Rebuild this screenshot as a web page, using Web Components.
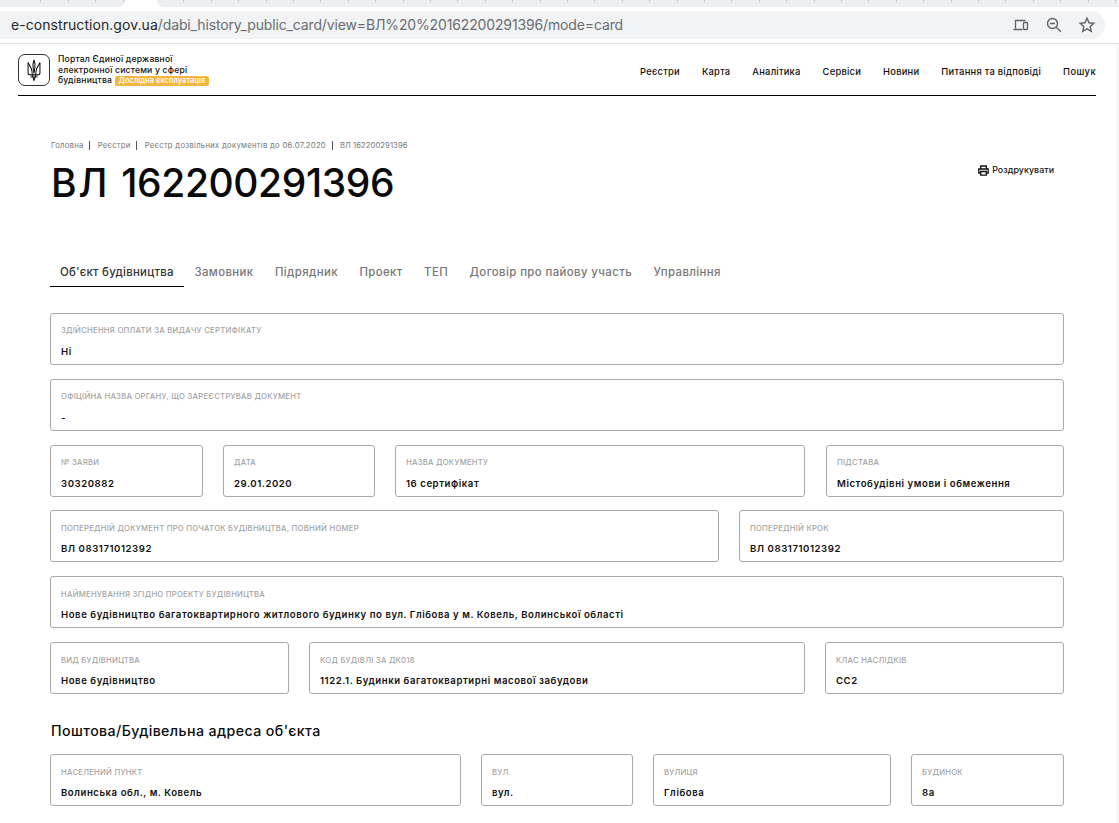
<!DOCTYPE html>
<html><head><meta charset="utf-8"><style>
html,body{margin:0;padding:0;background:#fff;overflow:hidden;height:823px;font-family:Inter,"Liberation Sans",sans-serif}
</style></head><body>
<browser-bar></browser-bar>
<site-header></site-header>
<page-main>
<bread-crumbs></bread-crumbs>
<title-row></title-row>
<tab-strip></tab-strip>
<section style="display:flex;flex-direction:column;gap:14px;">
<field-row cols="1fr"><info-field label="Здійснення оплати за видачу сертифікату" value="Ні"></info-field></field-row>
<field-row cols="1fr"><info-field label="Офіційна назва органу, що зареєстрував документ" value="-"></info-field></field-row>
<field-row cols="153px 152px 411px 238px"><info-field label="№ заяви" value="30320882"></info-field><info-field label="Дата" value="29.01.2020"></info-field><info-field label="Назва документу" value="16 сертифікат" style="margin-right:1px"></info-field><info-field label="Підстава" value="Містобудівні умови і обмеження"></info-field></field-row>
<field-row cols="669px 325px" style="margin-top:-1px;--lab-shift:1px"><info-field label="Попередній документ про початок будівництва, повний номер" value="ВЛ 083171012392"></info-field><info-field label="Попередній крок" value="ВЛ 083171012392"></info-field></field-row>
<field-row cols="1fr" style="--lab-shift:1px"><info-field label="Найменування згідно проекту будівництва" value="Нове будівництво багатоквартирного житлового будинку по вул. Глібова у м. Ковель, Волинської області"></info-field></field-row>
<field-row cols="239px 496px 239px" style="--lab-shift:1px"><info-field label="Вид будівництва" value="Нове будівництво"></info-field><info-field label="Код будівлі за ДК018" value="1122.1. Будинки багатоквартирні масової забудови"></info-field><info-field label="Клас наслідків" value="СС2"></info-field></field-row>
</section>
<section-head>Поштова/Будівельна адреса об'єкта</section-head>
<field-row cols="411px 152px 238px 153px" style="--lab-shift:1px"><info-field label="Населений пункт" value="Волинська обл., м. Ковель"></info-field><info-field label="Вул." value="вул."></info-field><info-field label="Вулиця" value="Глібова"></info-field><info-field label="Будинок" value="8а"></info-field></field-row>
</page-main>
<scroll-track></scroll-track>
<script>
function def(name, css, html, init){
  customElements.define(name, class extends HTMLElement{
    connectedCallback(){
      if(this.shadowRoot) return;
      const r=this.attachShadow({mode:'open'});
      r.innerHTML='<style>'+css+'</style>'+(typeof html==='function'?html(this):html);
      if(init) init(this,r);
    }
  });
}
def('scroll-track',`:host{position:fixed;top:44px;right:0;bottom:0;width:3px;background:#f6f6f6}`,``);
def('browser-bar',`:host{display:block;height:44px;box-sizing:border-box;border-bottom:1px solid #dfe1e5;background:#fff;position:relative;overflow:hidden}
.tabs{height:7px;display:flex;justify-content:space-between}
.tabs i{display:block;height:7px;background-color:#eceef1;background-image:repeating-linear-gradient(90deg,transparent 0 26.4px,#c4c6ca 26.4px 27.4px);background-size:100% 2px;background-repeat:no-repeat}
.tabs i:first-child{width:125px;border-radius:0 0 10px 0;background-position:14px 0}.tabs i:last-child{flex:0 0 962px;border-radius:0 0 0 10px}
.url{margin:4px 0 0;height:28px;width:1105px;background:#f1f3f4;border-radius:0 14px 14px 0;display:flex;align-items:center;padding-left:11px;box-sizing:border-box;font:14px/28px Inter,"Liberation Sans",sans-serif;color:#6a6d71;white-space:nowrap;letter-spacing:-.14px}
.url b{font-weight:400;color:#27292c;letter-spacing:.06px}.ic{margin-left:auto;display:flex;gap:15px;align-items:center;padding-right:9px}svg{display:block}`,
`<div class="tabs"><i></i><i></i></div><div class="url"><b>e-construction.gov.ua</b>/dabi_history_public_card/view=ВЛ%20%20162200291396/mode=card
<span class="ic"><svg width="18" height="18" viewBox="0 0 18 18" fill="none" stroke="#5f6368" stroke-width="1.3"><path d="M3.5 12.5V4.5h10M1.5 13.5h9"/><rect x="11.5" y="6.5" width="4" height="7" rx=".8"/></svg><svg width="18" height="18" viewBox="0 0 18 18" fill="none" stroke="#5f6368" stroke-width="1.4"><circle cx="7.5" cy="7.5" r="5"/><path d="M5 7.5h5M11.3 11.3l4.5 4.5"/></svg><svg width="18" height="18" viewBox="0 0 18 18" fill="none" stroke="#5f6368" stroke-width="1.4"><path d="M9 2.3l2 4.5 4.8.5-3.6 3.2 1 4.8L9 12.8l-4.2 2.5 1-4.8-3.6-3.2 4.8-.5z"/></svg></span></div>`);
def('site-header',`:host{display:flex;box-sizing:border-box;width:1078px;margin-left:18px;height:52px;border-bottom:1px solid #000;padding-top:10px;justify-content:space-between;color:#111}
.brand{display:flex;gap:8px}.logo{width:32px;height:32px;border:1px solid #333;border-radius:7px;display:flex;align-items:center;justify-content:center;box-sizing:border-box}
.txt{font-size:8.6px;line-height:10.5px;font-weight:500;letter-spacing:.2px;padding-top:0}
.badge{display:inline-block;background:#f2b63f;color:#fff;border-radius:2px;font-size:7.5px;line-height:10px;padding:0 4px;margin-left:2.5px;letter-spacing:.05px}
nav{display:flex;gap:22px;font-size:9.4px;font-weight:500;padding-top:12px;line-height:12px;letter-spacing:.22px}`,
`<div class="brand"><div class="logo"><svg width="14" height="23" viewBox="0 0 16 26" fill="none" stroke="#111" stroke-width="1.2" stroke-linejoin="round"><path d="M1.2 4V15.5Q1.2 18 4 18H12Q14.8 18 14.8 15.5V4"/><path d="M1.2 4L5 11Q6 14 6 18M14.8 4L11 11Q10 14 10 18"/><path d="M8 1L6.8 6Q7 12 8 16Q9 12 9.2 6Z"/><path d="M6 18L8 24.5L10 18M4 20.5H12"/></svg></div>
<div class="txt">Портал Єдиної державної<br>електронної системи у сфері<br>будівництва<span class="badge">Дослідна експлуатація</span></div></div>
<nav><span>Реєстри</span><span>Карта</span><span>Аналітика</span><span>Сервіси</span><span>Новини</span><span style="letter-spacing:.25px">Питання та відповіді</span><span style="letter-spacing:.4px">Пошук</span></nav>`);
def('page-main',`:host{display:block;padding:0 55px 0 50px}`,`<slot></slot>`);
def('bread-crumbs',`:host{display:flex;height:11px;margin-top:44px;margin-left:1px;font-size:7.7px;line-height:11px;color:#777;white-space:nowrap;align-items:center;letter-spacing:.28px}
i{display:block;width:1px;height:9px;background:#555;margin:0 7.5px 0 5.5px}
span:last-child{letter-spacing:.05px}`,
`<span>Головна</span><i></i><span>Реєстри</span><i></i><span>Реєстр дозвільних документів до 06.07.2020</span><i></i><span>ВЛ 162200291396</span>`);
def('title-row',`:host{display:flex;justify-content:space-between;align-items:flex-start;height:104px}
h1{margin:9px 0 0 1px;font-size:39px;line-height:46px;font-weight:500;color:#0a0a0a;letter-spacing:-.4px}
h1 span{letter-spacing:1.7px}
.p{display:flex;gap:3px;align-items:center;font-size:8.9px;font-weight:500;color:#111;margin:12px 10px 0 0;line-height:14px;letter-spacing:.03px}`,
`<h1><span>ВЛ </span>162200291396</h1><div class="p"><svg width="11" height="11" viewBox="0 0 11 11" fill="none" stroke="#111" stroke-width="1.3"><path d="M2.7 4V1h5.6v3M2.7 8H.8V4h9.4v4H8.3"/><path d="M2.7 6.5h5.6v3.7H2.7z"/></svg>Роздрукувати</div>`);
def('tab-strip',`:host{display:flex;height:32px;margin-bottom:26px;font-size:11.4px;font-weight:500;color:#777;letter-spacing:.4px;line-height:16px}
span{padding:9px 10.7px 0;box-sizing:border-box;height:32px;white-space:nowrap}
span.a{color:#333;border-bottom:1px solid #000;padding:9px 10px 0;letter-spacing:.26px}`,
`<span class="a">Об'єкт будівництва</span><span>Замовник</span><span>Підрядник</span><span>Проект</span><span>ТЕП</span><span>Договір про пайову участь</span><span>Управління</span>`);
def('field-row',`:host{display:grid;width:1014px;justify-content:space-between}`,`<slot></slot>`,(el)=>{el.style.gridTemplateColumns=el.getAttribute('cols')});
def('info-field',`:host{display:block;box-sizing:border-box;height:52px;border:1px solid #a9a9a9;border-radius:3px;padding:calc(11px + var(--lab-shift,0px)) 10px 0;background:#fff;min-width:0}
.l{font-size:7.7px;line-height:12px;color:#a3a3a3;text-transform:uppercase;font-weight:500;white-space:nowrap;letter-spacing:.25px}
.v{font-size:9.6px;line-height:14px;font-weight:600;color:#111;margin-top:calc(8px - var(--lab-shift,0px));white-space:nowrap;letter-spacing:.55px}`,
(e)=>`<div class="l">${e.getAttribute('label')}</div><div class="v">${e.getAttribute('value')}</div>`);
def('section-head',`:host{display:block;font-size:14.2px;line-height:20px;font-weight:500;color:#0d0d0d;margin:27px 0 13px 1px;letter-spacing:.4px}`,`<slot></slot>`);
</script>
</body></html>
